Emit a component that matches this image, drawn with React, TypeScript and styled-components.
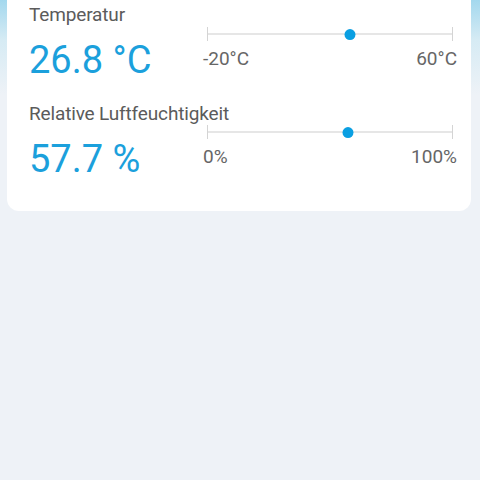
import styled, { createGlobalStyle } from 'styled-components';

const GlobalStyle = createGlobalStyle`
  html, body {
    margin: 0;
    padding: 0;
    min-height: 100vh;
    background: linear-gradient(180deg, #a3d8ee 0px, #d6ebf4 40px, #eef2f7 95px) no-repeat, #eef2f7;
    font-family: Roboto, "Noto Sans", "Liberation Sans", sans-serif;
  }
`;

const Page = styled.div`
  padding: 0 9px 0 7px;
`;

const Card = styled.section`
  background: #ffffff;
  border-radius: 0 0 12px 12px;
  padding: 4px 14px 29px 22px;
  display: flex;
  flex-direction: column;
  gap: 20px;
`;

const Row = styled.div`
  display: grid;
  grid-template-columns: 174px 1fr;
`;

const Info = styled.div`
  display: flex;
  flex-direction: column;
  gap: 11px;
`;

const Label = styled.div`
  font-size: 19px;
  line-height: 22px;
  color: #5b5b5b;
  letter-spacing: -0.15px;
  white-space: nowrap;
`;

const Value = styled.div`
  font-size: 38px;
  line-height: 46px;
  color: #1ba0dc;
`;

const Gauge = styled.div<{ $offset: number }>`
  padding-top: ${({ $offset }) => $offset}px;
`;

const Track = styled.div`
  position: relative;
  height: 14px;
  margin: 0 4px;
  border-left: 1px solid #d4d4d4;
  border-right: 1px solid #d4d4d4;
  background: linear-gradient(#e6e6e6, #e6e6e6) center / 100% 2px no-repeat;
`;

const Thumb = styled.span`
  position: absolute;
  top: 50%;
  width: 11px;
  height: 11px;
  border-radius: 50%;
  background: #0a9fe2;
  transform: translate(-50%, -45%);
`;

const Scale = styled.div`
  display: flex;
  justify-content: space-between;
  margin-top: 7px;
  font-size: 19px;
  line-height: 22px;
  color: #666666;
`;

type Reading = {
  label: string;
  value: string;
  current: number;
  min: number;
  max: number;
  minLabel: string;
  maxLabel: string;
  offset: number;
};

const readings: Reading[] = [
  { label: 'Temperatur', value: '26.8 °C', current: 26.8, min: -20, max: 60, minLabel: '-20°C', maxLabel: '60°C', offset: 23 },
  { label: 'Relative Luftfeuchtigkeit', value: '57.7 %', current: 57.7, min: 0, max: 100, minLabel: '0%', maxLabel: '100%', offset: 22 },
];

export default function App() {
  return (
    <>
      <GlobalStyle />
      <Page>
        <Card>
          {readings.map((r) => {
            const pct = (r.current - r.min) / (r.max - r.min);
            return (
              <Row key={r.label}>
                <Info>
                  <Label>{r.label}</Label>
                  <Value>{r.value}</Value>
                </Info>
                <Gauge $offset={r.offset}>
                  <Track>
                    <Thumb style={{ left: `calc(5px + (100% - 10px) * ${pct})` }} />
                  </Track>
                  <Scale>
                    <span>{r.minLabel}</span>
                    <span>{r.maxLabel}</span>
                  </Scale>
                </Gauge>
              </Row>
            );
          })}
        </Card>
      </Page>
    </>
  );
}
